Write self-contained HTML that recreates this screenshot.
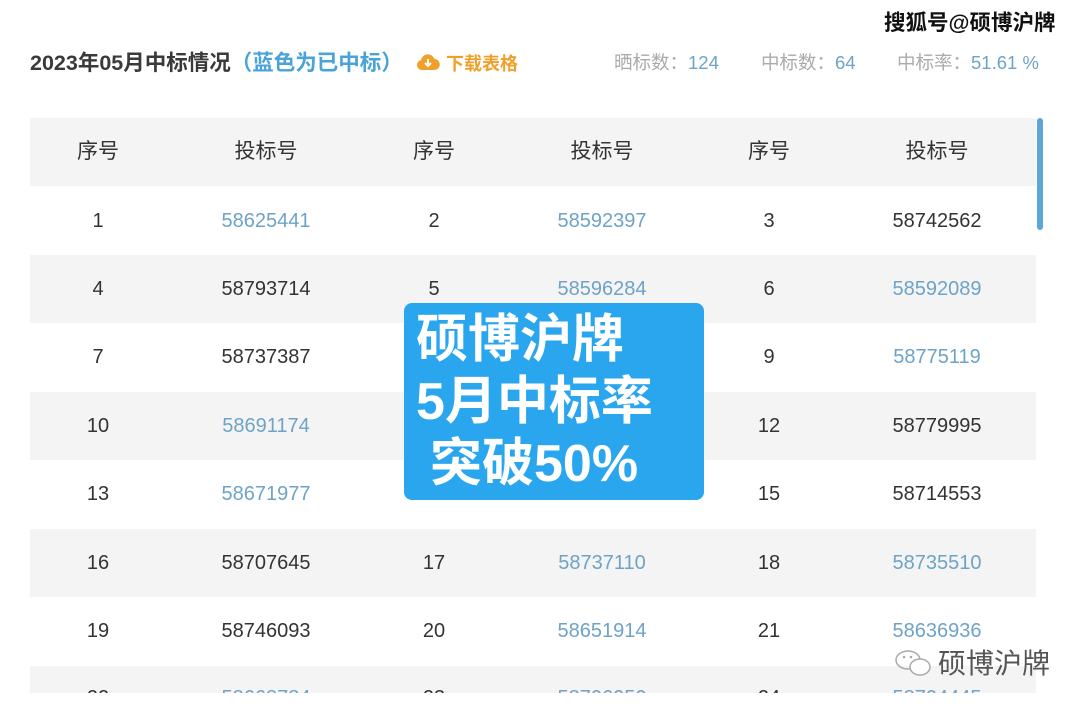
<!DOCTYPE html>
<html><head><meta charset="utf-8"><style>
*{margin:0;padding:0;box-sizing:border-box}
body{width:1080px;height:712px;overflow:hidden;background:#fff;position:relative;font-family:"Liberation Sans","Noto Sans CJK SC",sans-serif}
.a{position:absolute;white-space:nowrap}
.row{position:absolute;left:30px;width:1006px;height:68px}
.g{background:#f4f4f4}
.c{position:absolute;width:200px;margin-left:-100px;text-align:center;font-size:20px;color:#333;line-height:20px}
.b{color:#6ea3c8}
.h{font-size:21px;color:#333}
</style></head><body>
<div class="a" style="left:30px;top:49px;font-size:21.5px;font-weight:bold;color:#3a3a3a;line-height:28px">2023年05月中标情况<span style="color:#4aa3d8">（蓝色为已中标）</span></div>
<svg class="a" style="left:416px;top:52px" width="24" height="20" viewBox="0 0 24 20"><path d="M6 18a5 5 0 0 1-1-9.9A7 7 0 0 1 18.5 7 5.5 5.5 0 0 1 18 18z" fill="#f0a02a"/><path d="M12 7v7M9 11l3 3 3-3" stroke="#fff" stroke-width="2" fill="none"/></svg>
<div class="a" style="left:446px;top:52px;font-size:18px;font-weight:bold;color:#f0a02a;line-height:24px">下载表格</div>
<div class="a" style="left:614px;top:52px;font-size:18.5px;color:#aaa;line-height:22px">晒标数：<span style="color:#6ea3c8">124</span></div>
<div class="a" style="left:761px;top:52px;font-size:18.5px;color:#aaa;line-height:22px">中标数：<span style="color:#6ea3c8">64</span></div>
<div class="a" style="left:897px;top:52px;font-size:18.5px;color:#aaa;line-height:22px">中标率：<span style="color:#6ea3c8">51.61 %</span></div>
<div class="a" style="left:884px;top:10px;font-size:21.5px;font-weight:bold;color:#111;line-height:26px;text-shadow:0 0 2px #fff,0 0 2px #fff">搜狐号@硕博沪牌</div>

<div class="row g" style="top:118px"></div>
<div class="row g" style="top:255px"></div>
<div class="row g" style="top:392px"></div>
<div class="row g" style="top:529px"></div>
<div class="row g" style="top:666px;height:27px"></div>
<div class="a" style="left:1037px;top:118px;width:6px;height:112px;border-radius:3px;background:#5ea6d8"></div>

<div class="c h" style="left:98px;top:142px">序号</div><div class="c h" style="left:266px;top:142px">投标号</div><div class="c h" style="left:434px;top:142px">序号</div><div class="c h" style="left:602px;top:142px">投标号</div><div class="c h" style="left:769px;top:142px">序号</div><div class="c h" style="left:937px;top:142px">投标号</div>

<div class="c" style="left:98px;top:211px">1</div><div class="c b" style="left:266px;top:211px">58625441</div><div class="c" style="left:434px;top:211px">2</div><div class="c b" style="left:602px;top:211px">58592397</div><div class="c" style="left:769px;top:211px">3</div><div class="c" style="left:937px;top:211px">58742562</div>
<div class="c" style="left:98px;top:279px">4</div><div class="c" style="left:266px;top:279px">58793714</div><div class="c" style="left:434px;top:279px">5</div><div class="c b" style="left:602px;top:279px">58596284</div><div class="c" style="left:769px;top:279px">6</div><div class="c b" style="left:937px;top:279px">58592089</div>
<div class="c" style="left:98px;top:347px">7</div><div class="c" style="left:266px;top:347px">58737387</div><div class="c" style="left:434px;top:347px">8</div><div class="c b" style="left:602px;top:347px">58698145</div><div class="c" style="left:769px;top:347px">9</div><div class="c b" style="left:937px;top:347px">58775119</div>
<div class="c" style="left:98px;top:416px">10</div><div class="c b" style="left:266px;top:416px">58691174</div><div class="c" style="left:434px;top:416px">11</div><div class="c b" style="left:602px;top:416px">58710703</div><div class="c" style="left:769px;top:416px">12</div><div class="c" style="left:937px;top:416px">58779995</div>
<div class="c" style="left:98px;top:484px">13</div><div class="c b" style="left:266px;top:484px">58671977</div><div class="c" style="left:434px;top:484px">14</div><div class="c b" style="left:602px;top:484px">58702220</div><div class="c" style="left:769px;top:484px">15</div><div class="c" style="left:937px;top:484px">58714553</div>
<div class="c" style="left:98px;top:553px">16</div><div class="c" style="left:266px;top:553px">58707645</div><div class="c" style="left:434px;top:553px">17</div><div class="c b" style="left:602px;top:553px">58737110</div><div class="c" style="left:769px;top:553px">18</div><div class="c b" style="left:937px;top:553px">58735510</div>
<div class="c" style="left:98px;top:621px">19</div><div class="c" style="left:266px;top:621px">58746093</div><div class="c" style="left:434px;top:621px">20</div><div class="c b" style="left:602px;top:621px">58651914</div><div class="c" style="left:769px;top:621px">21</div><div class="c b" style="left:937px;top:621px">58636936</div>
<div class="a" style="left:0;top:693px;width:1080px;height:19px;background:#fff;z-index:2"></div>
<div class="c" style="left:98px;top:688px">22</div><div class="c b" style="left:266px;top:688px">58668784</div><div class="c" style="left:434px;top:688px">23</div><div class="c b" style="left:602px;top:688px">58706050</div><div class="c" style="left:769px;top:688px">24</div><div class="c b" style="left:937px;top:688px">58704445</div>

<svg class="a" style="left:894px;top:648px;z-index:3" width="40" height="32" viewBox="0 0 40 32"><ellipse cx="14" cy="12" rx="12" ry="9" fill="none" stroke="#aaa" stroke-width="1.5"/><ellipse cx="26" cy="19" rx="10" ry="8" fill="#fff" stroke="#aaa" stroke-width="1.5"/><circle cx="10" cy="9" r="1.3" fill="#aaa"/><circle cx="17" cy="9" r="1.3" fill="#aaa"/></svg>
<div class="a" style="left:938px;top:647px;font-size:28px;color:#555;line-height:34px;z-index:3">硕博沪牌</div>

<div class="a" style="left:404px;top:303px;width:300px;height:197px;border-radius:8px;background:#2aa6ef;z-index:4"></div>
<div class="a" style="left:416px;top:309px;font-size:52px;font-weight:bold;color:#fff;line-height:62px;z-index:5">硕博沪牌<br>5月中标率<br><span style="margin-left:14px">突破50%</span></div>
</body></html>
